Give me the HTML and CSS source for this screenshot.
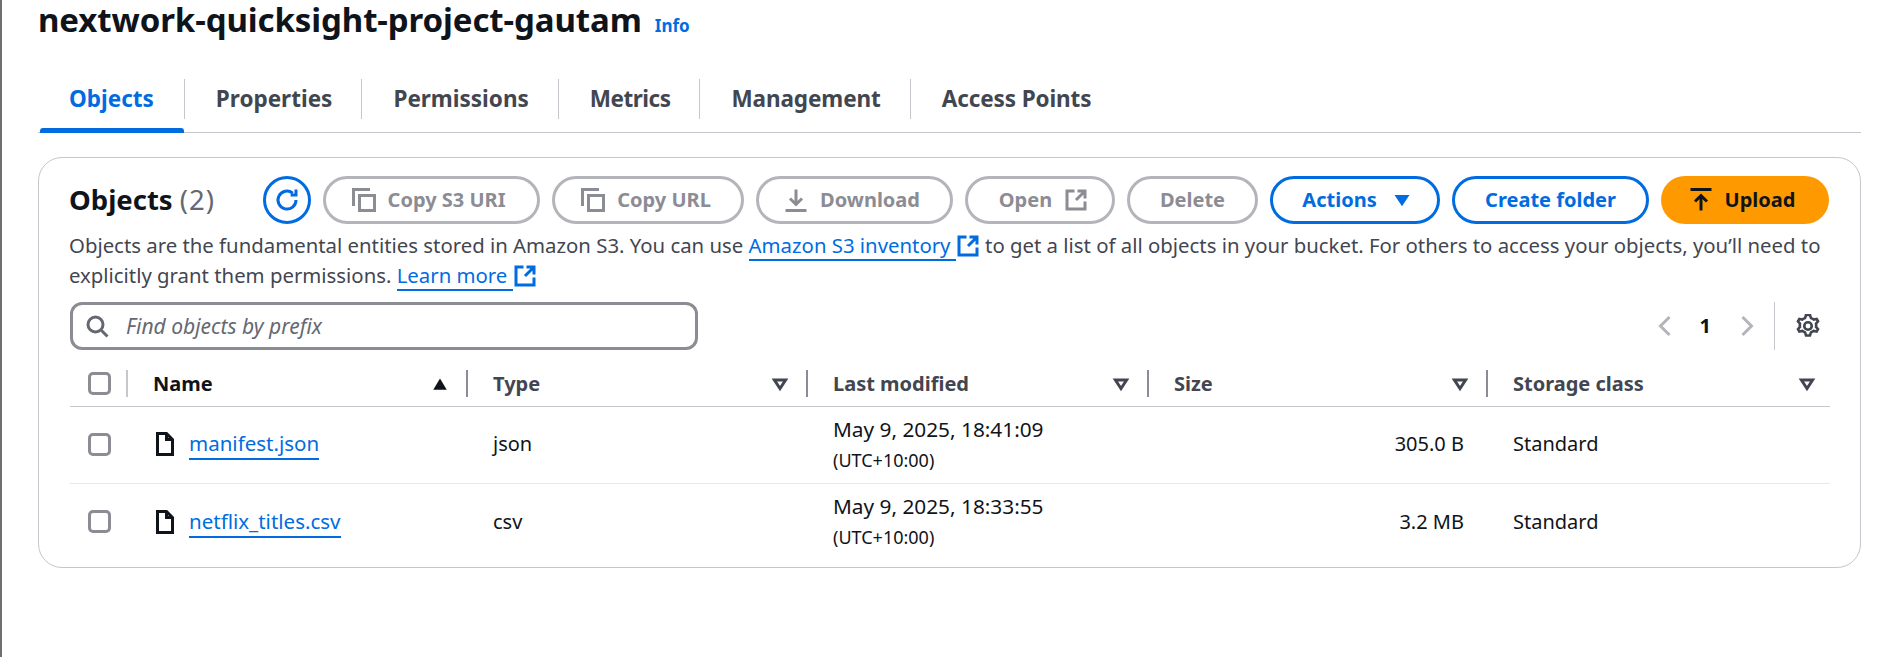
FILE: index.html
```html
<!DOCTYPE html>
<html lang="en">
<head>
<meta charset="utf-8">
<title>nextwork-quicksight-project-gautam</title>
<link rel="stylesheet" href="styles.css">
</head>
<body>
<svg class="defs" aria-hidden="true">
  <symbol id="i-copy" viewBox="0 0 16 16"><path d="M1 12V1h11"/><rect x="5" y="5" width="10" height="10"/></symbol>
  <symbol id="i-down" viewBox="0 0 16 16"><path d="M8 1v10M4 7l4 4 4-4M1 15h14"/></symbol>
  <symbol id="i-ext" viewBox="0 0 16 16"><path d="M14 9v5H2V2h5M9 2h5v5M14 2 8 8"/></symbol>
  <symbol id="i-up" viewBox="0 0 16 16"><path d="M1 1h14M8 15V5M4 9l4-4 4 4"/></symbol>
  <symbol id="i-file" viewBox="0 0 16 16"><path d="M9 1H3v14h10V5zM9 1v4h4"/></symbol>
</svg>
<main class="page">
  <header class="head">
    <h1 class="title">nextwork-quicksight-project-gautam</h1>
    <a class="info">Info</a>
  </header>
  <nav class="tabs">
    <a class="tab tab-on">Objects</a>
    <a class="tab">Properties</a>
    <a class="tab">Permissions</a>
    <a class="tab tab-tight">Metrics</a>
    <a class="tab tab-snug">Management</a>
    <a class="tab tab-snug tab-end">Access Points</a>
  </nav>
  <section class="card">
    <div class="bar">
      <h2 class="h2">Objects <span class="count">(2)</span></h2>
      <button class="round"><svg class="ic" viewBox="0 0 16 16"><path d="M14 8a6 6 0 1 1-2.2-4.6M14 1v3.6h-3.6"/></svg></button>
      <div class="actions">
        <button class="btn off w-s3"><svg class="ic"><use href="#i-copy"/></svg>Copy S3 URI</button>
        <button class="btn off w-url"><svg class="ic"><use href="#i-copy"/></svg>Copy URL</button>
        <button class="btn off w-dl"><svg class="ic"><use href="#i-down"/></svg>Download</button>
        <button class="btn off w-open">Open<svg class="ic"><use href="#i-ext"/></svg></button>
        <button class="btn off w-del">Delete</button>
        <button class="btn blue w-act">Actions<svg class="caret" viewBox="0 0 16 16"><path d="M2 4h12L8 13z"/></svg></button>
        <button class="btn blue w-new">Create folder</button>
        <button class="btn prim w-up"><svg class="ic"><use href="#i-up"/></svg>Upload</button>
      </div>
    </div>
    <p class="desc">Objects are the fundamental entities stored in Amazon S3. You can use <a class="link">Amazon S3 inventory </a><svg class="ic ic-ext"><use href="#i-ext"/></svg> to get a list of all objects in your bucket. For others to access your objects, you’ll need to explicitly grant them permissions. <a class="link">Learn more </a><svg class="ic ic-ext"><use href="#i-ext"/></svg></p>
    <div class="filter">
      <div class="search">
        <svg class="ic ic-search" viewBox="0 0 16 16"><circle cx="7" cy="7" r="5"/><path d="m11 11 4 4"/></svg>
        <span class="ph">Find objects by prefix</span>
      </div>
      <div class="pager">
        <svg class="ic ic-page" viewBox="0 0 16 16"><path d="M11 2 5 8l6 6"/></svg>
        <span class="pnum">1</span>
        <svg class="ic ic-page" viewBox="0 0 16 16"><path d="m5 2 6 6-6 6"/></svg>
        <span class="pdiv"></span>
        <svg class="ic ic-gear" viewBox="1.6 1.6 12.8 12.8"><path d="M13.33 5.46l-.7-1.21-1.57.3a4.94 4.94 0 0 0-1.5-.87L9.04 2.1H6.96l-.52 1.58c-.55.2-1.06.5-1.5.87l-1.57-.3-.7 1.21 1.05 1.24a5 5 0 0 0 0 1.74l-1.05 1.24.7 1.21 1.57-.3c.44.37.95.67 1.5.87l.52 1.58h2.08l.52-1.58c.55-.2 1.06-.5 1.5-.87l1.57.3.7-1.21-1.05-1.24a5 5 0 0 0 0-1.74z"/><circle cx="8" cy="8" r="2"/></svg>
      </div>
    </div>
    <div class="table">
      <div class="row thead">
        <div class="c-check"><span class="box"></span></div>
        <div class="th th-first">Name<svg class="sort" viewBox="0 0 16 16"><path d="M2 13h12L8 3z"/></svg></div>
        <div class="th">Type<svg class="sort open" viewBox="0 0 16 16"><path d="M3 4.5h10L8 12z"/></svg></div>
        <div class="th">Last modified<svg class="sort open" viewBox="0 0 16 16"><path d="M3 4.5h10L8 12z"/></svg></div>
        <div class="th">Size<svg class="sort open" viewBox="0 0 16 16"><path d="M3 4.5h10L8 12z"/></svg></div>
        <div class="th th-last">Storage class<svg class="sort open" viewBox="0 0 16 16"><path d="M3 4.5h10L8 12z"/></svg></div>
      </div>
      <div class="row tr">
        <div class="c-check"><span class="box"></span></div>
        <div class="td td-name"><svg class="ic ic-file"><use href="#i-file"/></svg><a class="link">manifest.json</a></div>
        <div class="td">json</div>
        <div class="td td-date">May 9, 2025, 18:41:09<br><span class="tz">(UTC+10:00)</span></div>
        <div class="td td-num">305.0 B</div>
        <div class="td">Standard</div>
      </div>
      <div class="row tr tr-last">
        <div class="c-check"><span class="box"></span></div>
        <div class="td td-name"><svg class="ic ic-file"><use href="#i-file"/></svg><a class="link">netflix_titles.csv</a></div>
        <div class="td">csv</div>
        <div class="td td-date">May 9, 2025, 18:33:55<br><span class="tz">(UTC+10:00)</span></div>
        <div class="td td-num">3.2 MB</div>
        <div class="td">Standard</div>
      </div>
    </div>
  </section>
</main>
</body>
</html>
```

FILE: styles.css
```css
* { box-sizing: border-box; }
html, body { margin: 0; height: 100%; }
body {
  background: #fff;
  border-left: 2px solid #6f6f6f;
  font-family: "Noto Sans", "Open Sans", sans-serif;
  font-size: 20px;
  line-height: 30px;
  color: #0f141a;
  overflow: hidden;
}
.defs { display: none; }
.page { padding: 0 25px 0 36px; }

.head { display: flex; align-items: baseline; height: 42px; }
.title { margin: 0; font-size: 33px; line-height: 40px; font-weight: 700; letter-spacing: -.1px; }
.info { margin-left: 13px; font-size: 17px; font-weight: 700; color: #006ce0; }

.tabs { display: flex; align-items: center; height: 91px; border-bottom: 1px solid #c6c6cd; padding-top: 23px; }
.tab {
  position: relative;
  display: flex; align-items: center;
  height: 40px;
  padding: 0 29px 0 31px;
  font-size: 22.5px; font-weight: 700;
  color: #424650;
  border-right: 1px solid #c6c6cd;
}
.tab-tight { letter-spacing: -.5px; }
.tab-snug { letter-spacing: -.1px; }
.tab-end { border-right: 0; }
.tab-on { color: #006ce0; padding-right: 30px; }
.tab-on::after {
  content: "";
  position: absolute; left: 2px; right: 0; bottom: -14px;
  height: 5px; background: #006ce0; border-radius: 3px 3px 0 0;
}

.card {
  margin-top: 24px;
  height: 411px;
  border: 1px solid #c6c6cd;
  border-radius: 24px;
  padding: 18px 30px 0 31px;
}
.bar { display: flex; align-items: center; height: 48px; }
.h2 { margin: 0 0 0 -1px; font-size: 27.5px; font-weight: 700; line-height: 36px; width: 194px; }
.count { font-weight: 400; color: #656871; letter-spacing: 1px; }
.round {
  width: 48px; height: 48px; padding: 0;
  display: flex; align-items: center; justify-content: center;
  background: #fff; border: 3px solid #006ce0; border-radius: 50%;
  color: #006ce0; flex: none;
}
.ic { width: 24px; height: 24px; fill: none; stroke: currentColor; stroke-width: 2; flex: none; }
.actions { display: flex; gap: 12px; margin-left: 12px; }
.btn {
  display: flex; align-items: center; justify-content: center; gap: 12px;
  height: 48px; padding: 0 0 2px;
  border-radius: 24px;
  font: 700 20px "Noto Sans", "Open Sans", sans-serif;
  background: #fff; flex: none;
}
.btn .ic, .btn .caret { margin-top: 2px; }
.off { border: 3px solid #b4b4bb; color: #8c8c94; }
.blue { border: 3px solid #006ce0; color: #006ce0; }
.prim { border: 0; background: #ff9900; color: #0f141a; }
.w-s3 { width: 217px; padding-right: 6px; } .w-url { width: 192px; padding-right: 4px; }
.w-dl { width: 197px; padding-right: 5px; }
.w-open { width: 150px; padding-left: 7px; }
.w-del { width: 131px; } .w-act { width: 170px; gap: 15px; padding-left: 4px; } .w-new { width: 197px; }
.w-up { width: 168px; padding-right: 6px; }
.caret { width: 20px; height: 20px; fill: currentColor; }

.desc { margin: 6px 0 0 -1px; color: #424650; font-size: 20.35px; line-height: 30px; width: 1770px; }
.link { color: #006ce0; border-bottom: 2px solid #006ce0; }
.ic-ext { color: #006ce0; vertical-align: -5px; }

.filter { display: flex; justify-content: space-between; align-items: center; margin-top: 12px; height: 48px; }
.search {
  display: flex; align-items: center; gap: 17px;
  width: 628px; height: 48px;
  border: 3px solid #8c8c94; border-radius: 12px;
  padding-left: 12px; color: #656871;
}
.ic-search { color: #656871; }
.ph { font-style: italic; font-size: 21px; }
.pager { display: flex; align-items: center; color: #b4b4bb; padding-right: 10px; }
.ic-page { margin: 0 12px; }
.pnum { color: #0f141a; font-weight: 700; margin: 0 12px 0 11px; }
.pdiv { width: 1px; height: 48px; background: #c6c6cd; margin: 0 21px 0 3px; }
.ic-gear { color: #424650; stroke-width: 1.4; }

.table { margin-top: 11px; }
.row { display: grid; grid-template-columns: 57px 340px 340px 341px 339px 342px; }
.thead { height: 46px; align-items: center; border-bottom: 1px solid #c6c6cd; }
.c-check { display: flex; padding-left: 18px; align-items: center; }
.box { width: 23px; height: 23px; border: 3px solid #8c8c94; border-radius: 5px; }
.th {
  display: flex; align-items: center; justify-content: space-between;
  height: 27px;
  margin-left: -1px;
  padding: 0 18px 0 25px;
  font-weight: 700; color: #424650;
  border-left: 2px solid #8c8c94;
}
.th-first { border-left-color: #c6c6cd; color: #0f141a; }
.th-last { padding-right: 13px; }
.sort { width: 18px; height: 18px; fill: #0f141a; }
.open { fill: none; stroke: #424650; stroke-width: 2.6; }
.tr { height: 77px; padding-bottom: 2px; align-items: center; border-bottom: 1px solid #e8e8ea; }
.tr-last { height: 75px; padding-bottom: 0; border-bottom: 0; }
.td { padding-left: 26px; color: #0f141a; }
.td-name { display: flex; align-items: center; gap: 12px; font-size: 20.5px; }
.td-date { font-size: 20.8px; }
.tz { font-size: 18px; }
.td-num { padding: 0 23px 0 0; text-align: right; }
.ic-file { color: #0f141a; }
```
